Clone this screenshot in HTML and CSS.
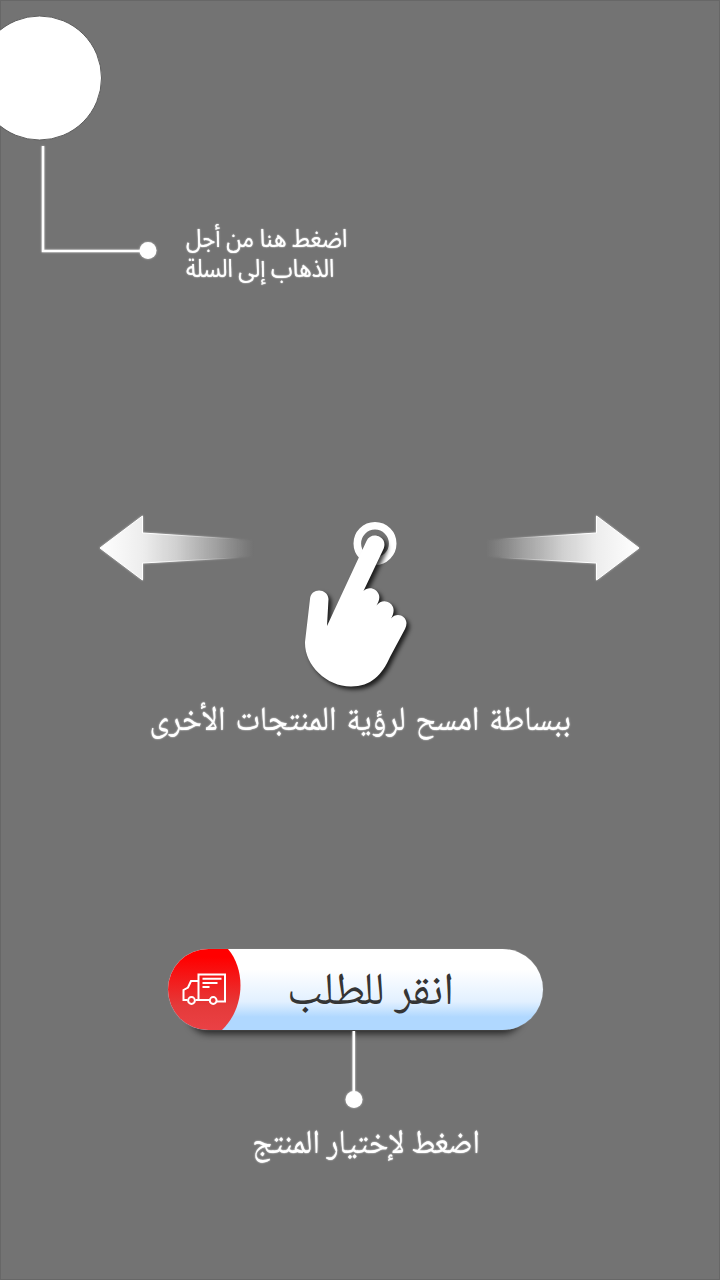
FILE: index.html
```html
<!DOCTYPE html>
<html lang="ar">
<head>
<meta charset="utf-8">
<title>دليل الاستخدام</title>
<link rel="stylesheet" href="styles.css">
</head>
<body>
<main class="guide">
  <section class="cart">
    <svg class="cart-pointer" width="160" height="264" viewBox="0 0 160 264">
      <circle cx="39.5" cy="78" r="62" fill="#fff" stroke="#5f5f5f" stroke-width="1"/>
      <path class="glow" d="M43 146V251H148" fill="none" stroke="#fff" stroke-width="2.6"/>
      <circle class="glow" cx="148" cy="250.500" r="8.500" fill="#fff"/>
    </svg>
    <p class="cart-label" dir="rtl"><span class="line first">اضغط هنا من أجل</span><span class="line second">الذهاب إلى السلة</span></p>
  </section>

  <section class="swipe">
    <div class="gesture">
      <svg class="arrow" width="170" height="76" viewBox="94 510 170 76">
        <defs>
          <linearGradient id="fade" gradientUnits="userSpaceOnUse" x1="100" y1="0" x2="254" y2="0">
            <stop offset="0" stop-color="#fff"/><stop offset=".28" stop-color="#ededed"/><stop offset=".5" stop-color="#d4d4d4" stop-opacity=".86"/><stop offset=".75" stop-color="#aaa" stop-opacity=".5"/><stop offset="1" stop-color="#737373" stop-opacity="0"/>
          </linearGradient>
          <linearGradient id="rim" gradientUnits="userSpaceOnUse" x1="100" y1="0" x2="240" y2="0">
            <stop offset=".4" stop-color="#fff"/><stop offset="1" stop-color="#fff" stop-opacity="0"/>
          </linearGradient>
        </defs>
        <path class="glow" d="M260 556.500L142.500 563V580L100 548L142.500 516V533L260 540.500" fill="url(#fade)" stroke="url(#rim)"/>
      </svg>
      <svg class="hand" width="140" height="190" viewBox="290 510 140 190">
        <circle cx="375" cy="543.500" r="17.700" fill="none" stroke="#fff" stroke-width="7.600"/>
        <path class="palm" d="M366.500 541C369 535.500 375 534 380 537C385 540 385.500 545 383 550L363.500 591C368 586 377 588 379 595C380 599 378.500 602 376.500 605.500C381 599 390 600 393 607C394.500 611 393 615 391 618.500C396 612 406 615 406.500 623C406.500 625 406 627 405 629L390 657C382 675 371 686.500 351 686.500C326 686.500 304.500 665 305 642L310 599C311 587.500 327.500 588 328.500 599L327 626Z" fill="#fff"/>
      </svg>
      <svg class="arrow flipped" width="170" height="76" viewBox="94 510 170 76">
        <path class="glow" d="M260 556.500L142.500 563V580L100 548L142.500 516V533L260 540.500" fill="url(#fade)" stroke="url(#rim)"/>
      </svg>
    </div>
    <p class="swipe-label" dir="rtl">ببساطة امسح لرؤية المنتجات الأخرى</p>
  </section>

  <section class="order">
    <div class="button">
      <svg class="badge" width="76" height="81" viewBox="168 949 76 81">
        <defs><linearGradient id="red" x1="0" y1="0" x2="0" y2="1"><stop offset=".1" stop-color="#f00"/><stop offset=".7" stop-color="#e53a3a"/><stop offset="1" stop-color="#ea4145"/></linearGradient></defs>
        <path d="M208.500 949H228C246 970 245 1008 222 1030H208.500A40.500 40.500 0 0 1 208.500 949Z" fill="url(#red)"/>
        <g fill="none" stroke="#fff" stroke-width="2">
          <path d="M187.500 1000H183.500V990L188 987.500L191 981H198.500M195.500 1000H209M198.500 1000V974.500H225V1001.500H217"/>
          <circle cx="191.500" cy="1000.500" r="3.400"/><circle cx="213.200" cy="1000.500" r="3.400"/>
          <path d="M202.500 978.800H221.500M202.500 983H217.500M202.500 987H209.500"/>
        </g>
      </svg>
      <span class="button-label" dir="rtl">انقر للطلب</span>
    </div>
    <svg class="order-pointer" width="24" height="79" viewBox="342 1031 24 79">
      <path class="glow" d="M353.800 1031V1092" stroke="#fff" stroke-width="2.600"/>
      <circle class="glow" cx="354" cy="1099.500" r="8.500" fill="#fff"/>
    </svg>
    <p class="order-label" dir="rtl">اضغط لإختيار المنتج</p>
  </section>
</main>
</body>
</html>
```
FILE: styles.css
```css
* { box-sizing: border-box; }
body { margin: 0; background: #737373; }
p { margin: 0; white-space: nowrap; }
svg { display: block; flex: none; }
.guide {
  width: 720px; height: 1280px; overflow: hidden;
  display: flex; flex-direction: column;
  background: #737373; box-shadow: inset 1px 1px #676767, inset -1px -1px #676767;
  color: #fff; font-family: "Noto Naskh Arabic", "Noto Sans", "DejaVu Sans", sans-serif;
}
.glow { filter: drop-shadow(0 0 1px rgba(255, 255, 255, .55)); }
.cart { height: 510px; display: flex; flex: none; }
.cart-label {
  padding: 224px 0 0 26px; display: flex; flex-direction: column; align-items: flex-start; direction: ltr;
  font: 400 25px/30px "Noto Sans Arabic", "Noto Sans", "DejaVu Sans", sans-serif;
  text-shadow: 0 0 2px rgba(255, 255, 255, .7), 0 0 1px rgba(255, 255, 255, .6);
}
.line { direction: rtl; transform-origin: left; }
.first { transform: scaleX(.885); }
.second { transform: scaleX(.875); }
.swipe { height: 439px; flex: none; }
.gesture { display: flex; padding-left: 94px; height: 190px; }
.hand { margin-left: 26px; }
.flipped { margin-left: 45px; transform: scaleX(-1); }
.swipe-label {
  margin-left: 149px; width: 422px; line-height: 45px; font-size: 31.5px; word-spacing: 3px;
  transform: scaleY(1.08);
  text-shadow: 0 0 2px rgba(255, 255, 255, .7), 0 0 1px rgba(255, 255, 255, .6);
}
.palm { filter: drop-shadow(3px 3px 2px rgba(0, 0, 0, .75)); }
.order { margin-left: 168px; }
.button {
  width: 375px; height: 81px; border-radius: 41px; display: flex;
  background: linear-gradient(#fff 25%, #e2f0ff 65%, #b0d8ff 84%, #b0d8ff);
  box-shadow: 0 0 1px #aaa, 0 25px 7px -21px rgba(0, 0, 0, .65);
}
.button-label { margin-left: 44px; width: 166px; line-height: 90px; font-size: 45.500px; color: #353535; white-space: nowrap; }
.order-pointer { margin: 1px 0 0 174px; position: relative; }
.order-label {
  margin-left: 86px; width: 226px; line-height: 71px; font-size: 31px;
  transform: scaleY(1.08);
  text-shadow: 0 0 2px rgba(255, 255, 255, .7), 0 0 1px rgba(255, 255, 255, .6);
}
```
